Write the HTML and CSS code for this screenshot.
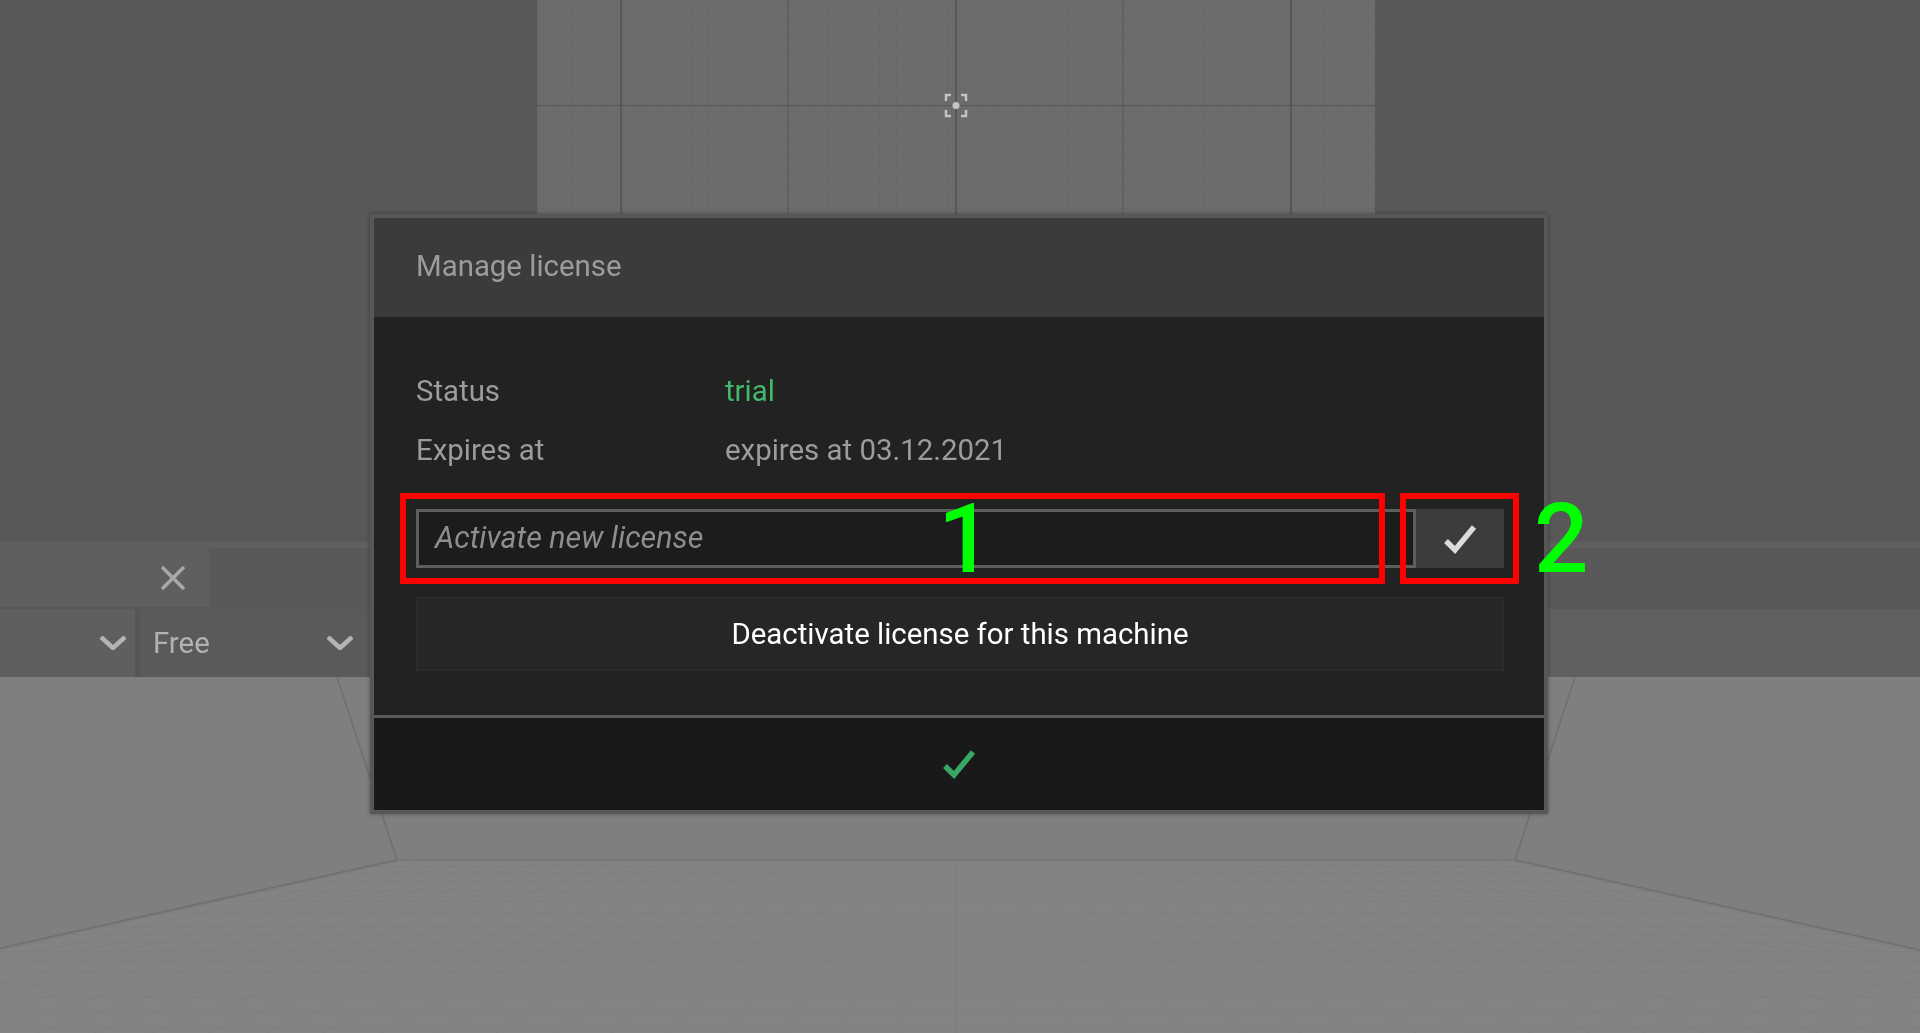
FILE: index.html
```html
<!DOCTYPE html>
<html lang="en">
<head>
  <meta charset="UTF-8">
  <title>Manage license</title>
  <link rel="stylesheet" href="styles.css">
</head>
<body>
  <div class="scene">
    <!-- viewport behind the dialog -->
    <svg class="scene-bg" viewBox="0 0 1920 1033" width="1920" height="1033">
      <defs>
        <pattern id="backGrid" x="537" y="3" width="17.1" height="17.1" patternUnits="userSpaceOnUse">
          <path d="M0 0V17.1M0 0H17.1" class="fine-line"/>
        </pattern>
        <clipPath id="floorClip">
          <polygon points="397,860 1515,860 1920,950 1920,1033 0,1033 0,950"/>
        </clipPath>
      </defs>

      <rect x="0" y="677" width="1920" height="356" class="wall"/>
      <polygon points="397,860 1515,860 1920,950 1920,1033 0,1033 0,950" class="floor"/>

      <g clip-path="url(#floorClip)">
        <path id="floorRays" class="floor-grid" d="M956 860V1033M980 860l33.5 173M1004 860l67 173M1028 860l100.5 173M1052 860l134 173M1076 860l167.5 173M1100 860l201 173M1124 860l234.5 173M1148 860l268 173M1172 860l301.5 173M1196 860l335 173M1220 860l368.5 173M1244 860l402 173M1268 860l435.5 173M1292 860l469 173M1316 860l502.5 173M1340 860l536 173M1364 860l569.5 173M1388 860l603 173M1412 860l636.5 173M1436 860l670 173M1460 860l703.5 173M1484 860l737 173M1508 860l770.5 173"/>
        <use href="#floorRays" transform="translate(1912 0) scale(-1 1)"/>
        <path class="floor-grid" d="M0 866.5H1920M0 873.8H1920M0 881.9H1920M0 891H1920M0 901.3H1920M0 913.1H1920M0 926.8H1920M0 934.4H1920M0 942.7H1920M0 951.7H1920M0 961.5H1920M0 972.2H1920M0 984H1920M0 997H1920M0 1011.6H1920M0 1027.8H1920"/>
      </g>

      <path id="roomEdge" class="room-edge" d="M1575 677L1515 860L1920 950"/>
      <use href="#roomEdge" transform="translate(1912 0) scale(-1 1)"/>
      <path class="room-seam" d="M397 860H1515"/>

      <rect x="537" y="0" width="838" height="220" class="back-panel"/>
      <rect x="537" y="0" width="838" height="220" fill="url(#backGrid)"/>
      <path class="grid-major" d="M621 0V220M956 0V220M1291 0V220"/>
      <path class="grid-minor" d="M788 0V220M1123 0V220M537 105.500H1375"/>

      <g class="focus-mark">
        <path d="M946 101V95H951M961 95H966V101M946 110V116H951M961 116H966V110"/>
        <circle cx="956" cy="105.500" r="3.500"/>
      </g>
    </svg>

    <div class="toolbars">
      <div class="toolbar-row">
        <div class="cell cell-close">
          <svg class="icon-close" viewBox="0 0 24 24" width="24" height="24"><path d="M1 1L23 23M23 1L1 23"/></svg>
        </div>
        <div class="cell-fill"></div>
      </div>
      <div class="toolbar-row toolbar-row-low">
        <div class="cell cell-select">
          <svg class="icon-chevron" viewBox="0 0 26 14" width="26" height="14"><path d="M1 1L13 12L25 1"/></svg>
        </div>
        <div class="cell cell-mode">
          <span>Free</span>
          <svg class="icon-chevron" viewBox="0 0 26 14" width="26" height="14"><path d="M1 1L13 12L25 1"/></svg>
        </div>
        <div class="cell-rest"></div>
      </div>
    </div>

    <div class="modal">
      <div class="modal-header">Manage license</div>
      <div class="modal-body">
        <div class="info-row">
          <div class="info-label">Status</div>
          <div class="info-trial">trial</div>
        </div>
        <div class="info-row">
          <div class="info-label">Expires at</div>
          <div>expires at 03.12.2021</div>
        </div>
        <div class="activate-row">
          <div class="license-input">Activate new license</div>
          <div class="activate-btn">
            <svg class="icon-check" viewBox="0 0 36 32" width="36" height="32"><path d="M4 18L13 27L32 4"/></svg>
          </div>
        </div>
        <div class="deactivate-btn">Deactivate license for this machine</div>
      </div>
      <div class="modal-footer">
        <svg class="icon-check icon-check-ok" viewBox="0 0 36 32" width="36" height="32"><path d="M4 18L13 27L32 4"/></svg>
      </div>
    </div>

    <!-- annotations drawn on top of the screenshot -->
    <div class="mark mark-one"></div>
    <div class="mark mark-two"></div>
    <div class="mark-num mark-num-one">1</div>
    <div class="mark-num mark-num-two">2</div>
  </div>
</body>
</html>
```

FILE: styles.css
```css
body {
  margin: 0;
  background-color: #585858;
  font-family: Roboto, sans-serif;
  overflow: hidden;
}

.scene {
  position: relative;
  width: 1920px;
  height: 1033px;
  overflow: hidden;
}

.scene-bg {
  position: absolute;
  top: 0;
  left: 0;
  filter: blur(0.6px);
}

.wall { fill: #7f7f7f; }
.floor { fill: #838383; }
.floor-grid { fill: none; stroke: #000; stroke-opacity: 0.025; stroke-width: 1; }
.room-edge { fill: none; stroke: #727272; stroke-width: 2; }
.room-seam { fill: none; stroke: #787878; stroke-width: 2; }
.back-panel { fill: #6c6c6c; }
.fine-line { fill: none; stroke: #000; stroke-opacity: 0.07; stroke-width: 1; }
.grid-major { fill: none; stroke: #525252; stroke-width: 1.5; }
.grid-minor { fill: none; stroke: #575757; stroke-width: 1; }
.focus-mark path { fill: none; stroke: #c4c4c4; stroke-width: 2.500; }
.focus-mark circle { fill: #c4c4c4; }

.toolbars {
  position: relative;
  padding-top: 542px;
  filter: blur(0.5px);
}

.toolbar-row {
  display: flex;
  height: 65px;
  background-color: #5f5f5f;
}

.toolbar-row-low {
  height: 68px;
  margin-top: 2px;
  background-color: #555;
}

.cell {
  display: flex;
  align-items: center;
  justify-content: flex-end;
  box-sizing: border-box;
}

.cell-close {
  width: 209px;
  padding: 6px 24px 0 0;
}

.cell-fill {
  flex: 1;
  margin-top: 6px;
  background-color: #595959;
}

.cell-select {
  width: 135px;
  padding-right: 9px;
  background-color: #5f5f5f;
}

.cell-mode {
  width: 231px;
  margin-left: 5px;
  padding: 0 18px 0 13px;
  justify-content: space-between;
  background-color: #5a5a5a;
  color: #b2b2b2;
  font-size: 29.400px;
}

.cell-rest {
  flex: 1;
  background-color: #606060;
}

.icon-close path {
  fill: none;
  stroke: #a8a8a8;
  stroke-width: 3.500;
}

.icon-chevron path {
  fill: none;
  stroke: #b4b4b4;
  stroke-width: 4.500;
}

.modal {
  position: absolute;
  top: 214px;
  left: 370px;
  width: 1178px;
  box-sizing: border-box;
  border: 4px solid #575757;
  box-shadow: 0 0 4px rgba(0, 0, 0, 0.35);
  color: #9c9c9c;
  font-size: 29.400px;
  filter: blur(0.6px);
}

.modal-header {
  height: 99px;
  box-sizing: border-box;
  padding: 31px 0 0 42px;
  line-height: 35px;
  background-color: #3b3b3b;
}

.modal-body {
  height: 398px;
  box-sizing: border-box;
  padding: 44px 40px 0 42px;
  background-color: #222;
}

.info-row {
  display: flex;
  align-items: center;
  height: 59px;
}

.info-label {
  width: 309px;
}

.info-trial {
  color: #41b86a;
}

.activate-row {
  display: flex;
  height: 59px;
  margin-top: 30px;
}

.license-input {
  flex: 1;
  box-sizing: border-box;
  padding: 8px 0 0 16px;
  line-height: 36px;
  background-color: #1c1c1c;
  border: 3px solid #5e5e5e;
  font-size: 30.400px;
  font-style: italic;
  color: #8e8e8e;
}

.activate-btn {
  width: 88px;
  display: flex;
  align-items: center;
  justify-content: center;
  background-color: #3c3c3c;
}

.icon-check path {
  fill: none;
  stroke: #dcdcdc;
  stroke-width: 5.500;
}

.icon-check-ok path {
  stroke: #38a863;
}

.deactivate-btn {
  display: flex;
  align-items: center;
  justify-content: center;
  height: 74px;
  margin-top: 29px;
  box-sizing: border-box;
  background-color: #262626;
  border: 2px solid #2b2b2b;
  color: #fff;
}

.modal-footer {
  display: flex;
  align-items: center;
  justify-content: center;
  height: 95px;
  border-top: 3px solid #5a5a5a;
  box-sizing: border-box;
  background-color: #191919;
}

/* red boxes and green numbers */
.mark {
  position: absolute;
  top: 493px;
  height: 91px;
  box-sizing: border-box;
  border: 6px solid #f00;
}

.mark-one {
  left: 400px;
  width: 985px;
}

.mark-two {
  left: 1400px;
  width: 119px;
}

.mark-num {
  position: absolute;
  top: 491px;
  color: #0f0;
  font-size: 96px;
  line-height: 96px;
  font-weight: 500;
}

.mark-num-one {
  left: 938px;
}

.mark-num-two {
  left: 1534px;
}
```
